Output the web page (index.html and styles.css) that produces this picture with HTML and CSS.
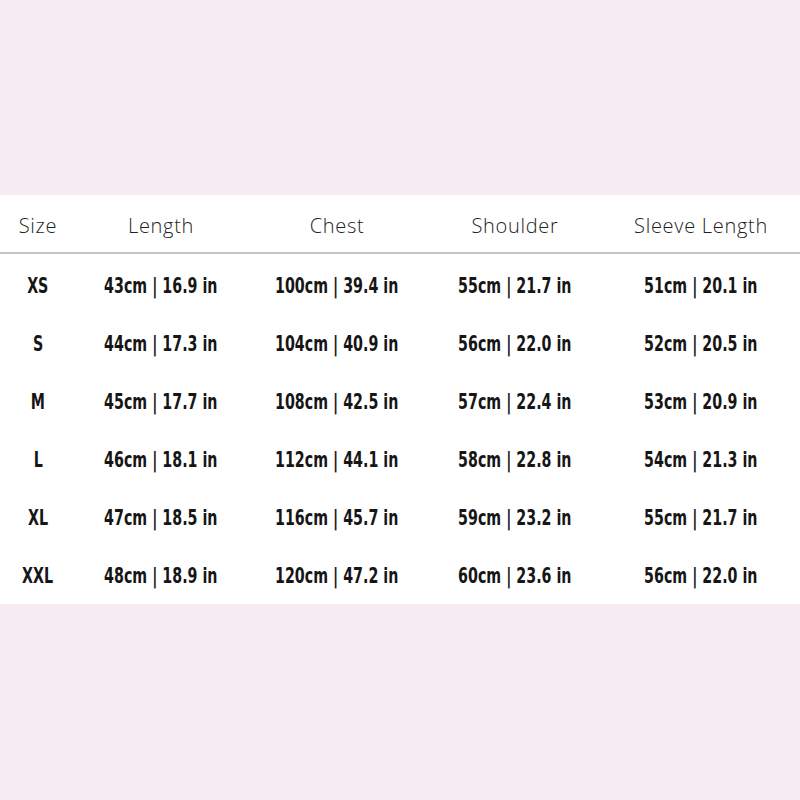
FILE: index.html
```html
<!DOCTYPE html>
<html>
<head>
<meta charset="utf-8">
<link rel="stylesheet" href="styles.css">
</head>
<body>
<div class="page">
  <div class="table">
    <div class="row head">
      <div class="cell">Size</div>
      <div class="cell">Length</div>
      <div class="cell">Chest</div>
      <div class="cell">Shoulder</div>
      <div class="cell">Sleeve Length</div>
    </div>
    <div class="body">
      <div class="row data">
        <div class="cell"><span>XS</span></div><div class="cell"><span>43cm | 16.9 in</span></div><div class="cell"><span>100cm | 39.4 in</span></div><div class="cell"><span>55cm | 21.7 in</span></div><div class="cell"><span>51cm | 20.1 in</span></div>
      </div>
      <div class="row data">
        <div class="cell"><span>S</span></div><div class="cell"><span>44cm | 17.3 in</span></div><div class="cell"><span>104cm | 40.9 in</span></div><div class="cell"><span>56cm | 22.0 in</span></div><div class="cell"><span>52cm | 20.5 in</span></div>
      </div>
      <div class="row data">
        <div class="cell"><span>M</span></div><div class="cell"><span>45cm | 17.7 in</span></div><div class="cell"><span>108cm | 42.5 in</span></div><div class="cell"><span>57cm | 22.4 in</span></div><div class="cell"><span>53cm | 20.9 in</span></div>
      </div>
      <div class="row data">
        <div class="cell"><span>L</span></div><div class="cell"><span>46cm | 18.1 in</span></div><div class="cell"><span>112cm | 44.1 in</span></div><div class="cell"><span>58cm | 22.8 in</span></div><div class="cell"><span>54cm | 21.3 in</span></div>
      </div>
      <div class="row data">
        <div class="cell"><span>XL</span></div><div class="cell"><span>47cm | 18.5 in</span></div><div class="cell"><span>116cm | 45.7 in</span></div><div class="cell"><span>59cm | 23.2 in</span></div><div class="cell"><span>55cm | 21.7 in</span></div>
      </div>
      <div class="row data">
        <div class="cell"><span>XXL</span></div><div class="cell"><span>48cm | 18.9 in</span></div><div class="cell"><span>120cm | 47.2 in</span></div><div class="cell"><span>60cm | 23.6 in</span></div><div class="cell"><span>56cm | 22.0 in</span></div>
      </div>
    </div>
  </div>
</div>
</body>
</html>
```

FILE: styles.css
```css
html, body {
  margin: 0;
  padding: 0;
  background: #f7ecf4;
}
.page {
  width: 800px;
  height: 800px;
  padding-top: 195px;
  box-sizing: border-box;
}
.table {
  background: #ffffff;
  width: 800px;
}
.row {
  display: grid;
  grid-template-columns: 76px 170px 182px 174px 198px;
}
.cell {
  text-align: center;
}
.head {
  height: 57px;
  box-sizing: border-box;
  padding-top: 3px;
  align-items: center;
  border-bottom: 2px solid #c4c4c4;
  font-family: "Open Sans", "Noto Sans", sans-serif;
  font-weight: 300;
  font-size: 20px;
  color: #222222;
  letter-spacing: 0.7px;
}
.head {
  height: 59px;
}
.body {
  padding: 2px 0 0;
}
.data {
  height: 58px;
  align-items: center;
  font-family: "DejaVu Sans Condensed", "DejaVu Sans", sans-serif;
  font-weight: 700;
  font-size: 22px;
  color: #161616;
}
.data span {
  display: inline-block;
  transform: scaleX(0.72);
  white-space: nowrap;
}
```
